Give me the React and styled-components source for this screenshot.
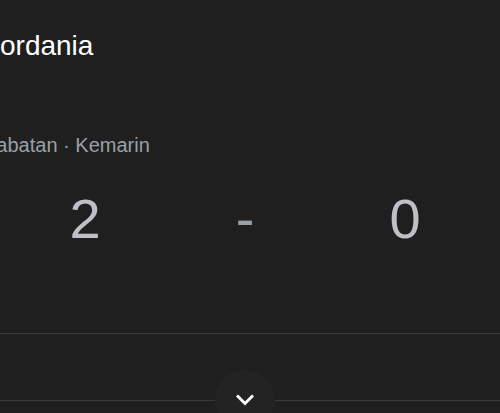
import React from 'react';
import styled, { createGlobalStyle } from 'styled-components';

const bgColor = '#1f1f1f';
const lineColor = '#3a3a3a';

const GlobalStyle = createGlobalStyle`
  html, body {
    margin: 0;
    padding: 0;
    background: ${bgColor};
  }
  body {
    width: 500px;
    height: 413px;
    overflow: hidden;
    font-family: "Liberation Sans", Arial, sans-serif;
  }
`;

const Card = styled.div`
  width: 500px;
  height: 413px;
  overflow: hidden;
  display: flex;
  flex-direction: column;
`;

const Title = styled.h2`
  margin: 28px 0 0 ${p => p.offset}px;
  font-size: 28px;
  line-height: 36px;
  font-weight: 400;
  color: #ffffff;
  white-space: nowrap;
`;

const Meta = styled.div`
  margin: 67px 0 0 ${p => p.offset}px;
  font-size: 20px;
  line-height: 28px;
  color: #9aa0a6;
  white-space: nowrap;
`;

const ScoreRow = styled.div`
  margin: 28px 0 0 5px;
  display: grid;
  grid-template-columns: repeat(3, 160px);
  font-size: 56px;
  line-height: 64px;
`;

const Score = styled.div`
  text-align: center;
  color: ${p => (p.dim ? '#9aa0a6' : '#bdc1c6')};
`;

const Spacer = styled.div`
  margin-top: 82px;
  height: 66px;
  border-top: 1px solid ${lineColor};
`;

const Footer = styled.div`
  position: relative;
  border-top: 1px solid ${lineColor};
  height: 12px;
`;

const ExpandButton = styled.button`
  position: absolute;
  left: 215px;
  top: -31px;
  width: 60px;
  height: 60px;
  border-radius: 50%;
  border: none;
  padding: 0;
  background: #232323;
  display: flex;
  align-items: center;
  justify-content: center;
  cursor: pointer;
`;

const Chevron = () => (
  <svg width="18" height="12" viewBox="0 0 18 12">
    <polyline
      points="2,2.5 9,9.5 16,2.5"
      fill="none"
      stroke="#ffffff"
      strokeWidth="3"
      strokeLinecap="square"
    />
  </svg>
);

const App = () => (
  <>
    <GlobalStyle />
    <Card>
      <Title offset={-14}>Jordania</Title>
      <Meta offset={-67}>Persahabatan · Kemarin</Meta>
      <ScoreRow>
        <Score>2</Score>
        <Score dim>-</Score>
        <Score>0</Score>
      </ScoreRow>
      <Spacer />
      <Footer>
        <ExpandButton aria-label="Selengkapnya">
          <Chevron />
        </ExpandButton>
      </Footer>
    </Card>
  </>
);

export default App;
